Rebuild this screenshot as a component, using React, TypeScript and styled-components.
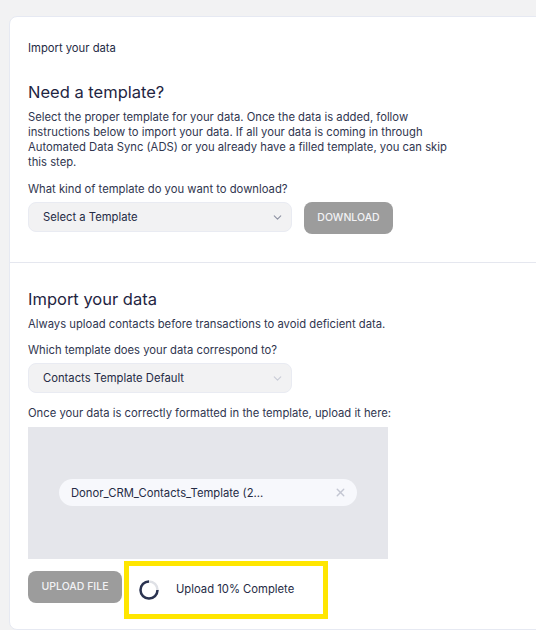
import styled, { createGlobalStyle } from "styled-components";
import { ChevronDown, X } from "lucide-react";

const GlobalStyle = createGlobalStyle`
	html, body {
		margin: 0;
		padding: 0;
		background: #f2f2f3;
		overflow: hidden;
		font-family: "Inter", "Liberation Sans", sans-serif;
		color: #252b45;
	}
	* {
		box-sizing: border-box;
	}
`;

const Page = styled.div`
	width: 536px;
	height: 630px;
	padding: 16px 0 0 9px;
	overflow: hidden;
`;

const Card = styled.div`
	width: 560px;
	height: 614px;
	background: #ffffff;
	border: 1px solid #e6e9f2;
	border-radius: 8px;
`;

const TopSection = styled.section`
	height: 246px;
	padding: 24px 0 0 18px;
	border-bottom: 1px solid #e5e7ef;
`;

const BottomSection = styled.section`
	padding: 24px 0 0 18px;
`;

const Crumb = styled.div`
	font-size: 11.25px;
	line-height: 14px;
	margin-bottom: 25px;
`;

const Heading = styled.h2`
	margin: 0 0 6px;
	font-size: 16.5px;
	line-height: 24px;
	font-weight: 400;
	color: #1f2542;
`;

const Body = styled.p`
	margin: 0;
	width: 430px;
	font-size: 11.25px;
	line-height: 15px;
	color: #30364f;
`;

const Label = styled.div<{ $top: number; $bottom: number }>`
	margin-top: ${(p) => p.$top}px;
	margin-bottom: ${(p) => p.$bottom}px;
	font-size: 11.25px;
	line-height: 15px;
	color: #30364f;
`;

const Row = styled.div`
	display: flex;
	align-items: flex-start;
	gap: 12px;
`;

const Select = styled.div<{ $muted?: boolean }>`
	width: 264px;
	height: 30px;
	padding: 0 7px 0 14px;
	display: flex;
	align-items: center;
	justify-content: space-between;
	background: #f2f2f3;
	border: 1px solid #e9ebf2;
	border-radius: 8px;
	font-size: 11.25px;
	color: #252b45;
	svg {
		color: ${(p) => (p.$muted ? "#c9ccd6" : "#8e92a3")};
	}
`;

const GreyButton = styled.button<{ $width: number }>`
	width: ${(p) => p.$width}px;
	height: 32px;
	padding: 0 0 2px;
	border: 0;
	border-radius: 8px;
	background: #9c9c9c;
	color: #f2f2f5;
	font-family: inherit;
	font-size: 10.5px;
	font-weight: 500;
`;

const DropZone = styled.div`
	width: 360px;
	height: 132px;
	display: flex;
	align-items: center;
	justify-content: center;
	background: #e5e6eb;
`;

const FilePill = styled.div`
	width: 298px;
	height: 27px;
	margin-bottom: 1px;
	padding: 0 10px 0 12px;
	display: flex;
	align-items: center;
	justify-content: space-between;
	background: #f7f8fc;
	border-radius: 14px;
	font-size: 11.25px;
	color: #252b45;
	svg {
		color: #c3c6d2;
	}
`;

const UploadRow = styled.div`
	display: flex;
	align-items: flex-start;
	margin-top: 2px;
`;

const UploadButtonSlot = styled.div`
	padding-top: 10px;
	margin-right: 2px;
`;

const ProgressBox = styled.div`
	width: 204px;
	height: 58px;
	padding-left: 10px;
	display: flex;
	align-items: center;
	gap: 17px;
	border: 5px solid #ffe600;
	font-size: 11.25px;
	color: #252b45;
	span {
		margin-bottom: 2px;
	}
`;

const Spinner = () => (
	<svg width="20" height="20" viewBox="0 0 20 20">
		<circle cx="10" cy="10" r="8.5" fill="none" stroke="#dfe1e6" strokeWidth="2.5" />
		<path
			d="M10 1.5 A8.5 8.5 0 1 0 18.5 10"
			fill="none"
			stroke="#2a3350"
			strokeWidth="2.5"
		/>
	</svg>
);

function App() {
	return (
		<Page>
			<GlobalStyle />
			<Card>
				<TopSection>
					<Crumb>Import your data</Crumb>
					<Heading>Need a template?</Heading>
					<Body>
						Select the proper template for your data. Once the data is added,
						follow instructions below to import your data. If all your data is
						coming in through Automated Data Sync (ADS) or you already have a
						filled template, you can skip this step.
					</Body>
					<Label $top={12} $bottom={5}>What kind of template do you want to download?</Label>
					<Row>
						<Select>
							Select a Template
							<ChevronDown size={13} />
						</Select>
						<GreyButton $width={89}>DOWNLOAD</GreyButton>
					</Row>
				</TopSection>
				<BottomSection>
					<Heading>Import your data</Heading>
					<Body>Always upload contacts before transactions to avoid deficient data.</Body>
					<Label $top={11} $bottom={5}>Which template does your data correspond to?</Label>
					<Select $muted>
						Contacts Template Default
						<ChevronDown size={13} />
					</Select>
					<Label $top={13} $bottom={6}>Once your data is correctly formatted in the template, upload it here:</Label>
					<DropZone>
						<FilePill>
							Donor_CRM_Contacts_Template (2...
							<X size={13} strokeWidth={2.5} />
						</FilePill>
					</DropZone>
					<UploadRow>
						<UploadButtonSlot>
							<GreyButton $width={94}>UPLOAD FILE</GreyButton>
						</UploadButtonSlot>
						<ProgressBox>
							<Spinner />
							<span>Upload 10% Complete</span>
						</ProgressBox>
					</UploadRow>
				</BottomSection>
			</Card>
		</Page>
	);
}

export default App;
